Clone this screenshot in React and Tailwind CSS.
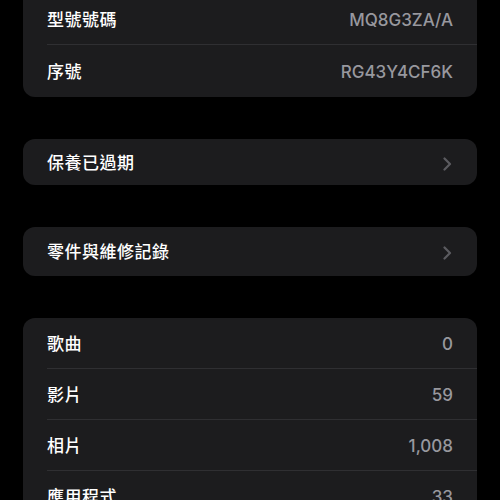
import React from "react";

const font = { fontFamily: "Inter, 'Noto Sans CJK TC', sans-serif" };

function Chevron() {
  return (
    <svg width="9" height="14" viewBox="0 0 9 14" fill="none">
      <path d="M1.5 1.5L7 7L1.5 12.5" stroke="#5b5b60" strokeWidth="2.2" strokeLinecap="round" strokeLinejoin="round" />
    </svg>
  );
}

function Row({ label, value, last, h = "h-[51px]" }) {
  return (
    <div className={`flex items-center pl-6 ${h}`}>
      <div className={`flex items-center justify-between flex-1 h-full pr-6 pt-1 ${last ? "" : "border-b border-[#2f2f32]"}`}>
        <span className="text-[17px] font-medium text-white tracking-[0.5px]">{label}</span>
        <span className="text-[17px] font-medium text-[#98989e]">{value}</span>
      </div>
    </div>
  );
}

function LinkCard({ label, h }) {
  return (
    <div className={`mx-[23px] rounded-[12px] bg-[#1c1c1e] flex items-center justify-between pl-6 pr-[25px] pt-[3px] ${h}`}>
      <span className="text-[17px] font-medium text-white tracking-[0.5px]">{label}</span>
      <Chevron />
    </div>
  );
}

export default function App() {
  return (
    <div className="w-[500px] h-[500px] bg-black overflow-hidden" style={font}>
      <div className="mt-[-6px] mx-[23px] rounded-b-[12px] bg-[#1c1c1e]">
        <Row label="型號號碼" value="MQ8G3ZA/A" />
        <Row label="序號" value="RG43Y4CF6K" last h="h-[52px]" />
      </div>
      <div className="h-[42px]" />
      <LinkCard label="保養已過期" h="h-[46px]" />
      <div className="h-[42px]" />
      <LinkCard label="零件與維修記錄" h="h-[49px]" />
      <div className="h-[42px]" />
      <div className="mx-[23px] rounded-t-[12px] bg-[#1c1c1e]">
        <Row label="歌曲" value="0" />
        <Row label="影片" value="59" />
        <Row label="相片" value="1,008" />
        <Row label="應用程式" value="33" />
      </div>
    </div>
  );
}
